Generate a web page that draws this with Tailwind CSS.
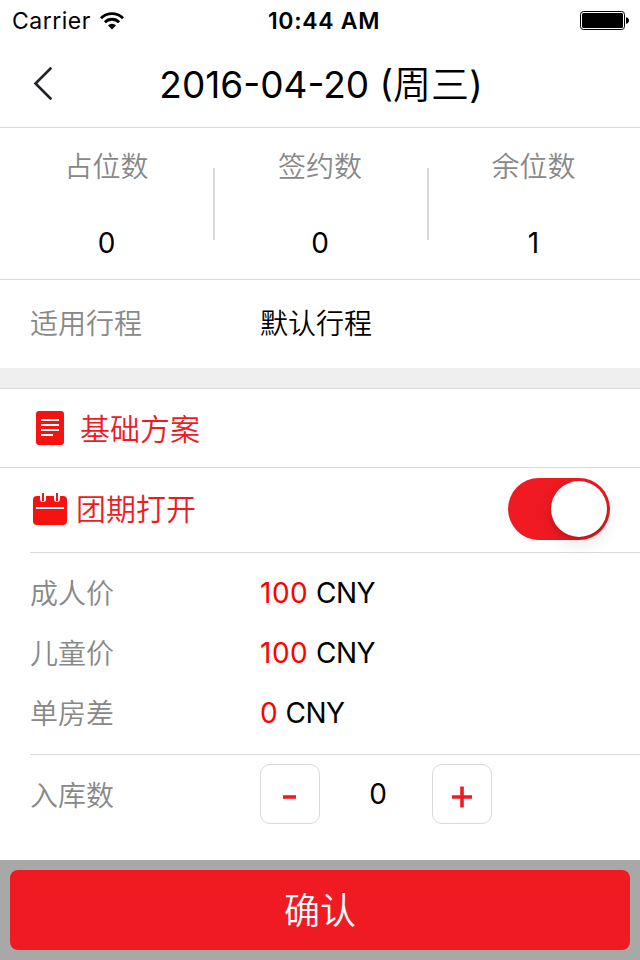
<!DOCTYPE html>
<html lang="zh-CN">
<head>
    <meta charset="UTF-8">
    <meta name="viewport" content="width=device-width, initial-scale=1.0">
    <title>团期详情</title>
    <script src="https://cdn.jsdelivr.net/npm/@tailwindcss/browser@4"></script>
    <style>
        body {
            font-family: 'Inter', 'Noto Sans CJK SC', sans-serif;
        }
    </style>
</head>
<body class="bg-white text-black w-[640px] h-[960px] flex flex-col overflow-hidden text-[28px] leading-10">

    <!-- Barre d'état -->
    <div class="h-10 shrink-0 grid grid-cols-3 items-center pl-3 pr-[11px] text-[23px]">
        <div class="flex items-center gap-[9px]">
            <span class="tracking-[0.5px] pt-px">Carrier</span>
            <svg class="w-6 h-[18px]" viewBox="0 0 24 18" fill="none" stroke="#000" stroke-width="2.9">
                <path d="M1 6.2a15.6 15.6 0 0 1 22 0"/>
                <path d="M4.9 10.2a10 10 0 0 1 14.2 0"/>
                <path d="M12 17.5l-4-4a5.7 5.7 0 0 1 8 0z" fill="#000" stroke="none"/>
            </svg>
        </div>
        <span class="text-center font-semibold tracking-[0.7px] pl-[7px] pt-px whitespace-nowrap">10:44 AM</span>
        <svg class="w-[49px] h-[19px] justify-self-end" viewBox="0 0 49 19">
            <rect x="0.5" y="0.5" width="44" height="18" rx="3" fill="none" stroke="#000"/>
            <rect x="2" y="2" width="41" height="15" rx="1.5"/>
            <path d="M46 6.2c1.7 0 3 1.4 3 3.3s-1.3 3.3-3 3.3z"/>
        </svg>
    </div>

    <!-- Titre -->
    <header class="h-22 shrink-0 relative flex items-center justify-center border-b border-[#d9d9d9]">
        <svg class="absolute left-[33px] top-[27px] w-[19px] h-[33px]" viewBox="0 0 19 33" fill="none" stroke="#222229" stroke-width="2.6" stroke-linecap="round">
            <path d="M17.5 1.5L2.5 16.5l15 15"/>
        </svg>
        <h1 class="text-[37px] whitespace-nowrap pl-0.5 pt-px font-[380]">2016-04-20 (<span class="font-[350] text-[38px]">周三</span>)</h1>
    </header>

    <!-- Places -->
    <section class="h-38 shrink-0 flex items-center border-b border-[#d9d9d9] text-center">
        <div class="w-[213px] pt-0.5">
            <p class="font-[350] text-[#888]">占位数</p>
            <p class="mt-9">0</p>
        </div>
        <div class="w-0.5 h-18 bg-[#d9d9d9]"></div>
        <div class="w-[212px] pr-0.5 pt-0.5">
            <p class="font-[350] text-[#888]">签约数</p>
            <p class="mt-9">0</p>
        </div>
        <div class="w-0.5 h-18 bg-[#d9d9d9]"></div>
        <div class="flex-1 pr-0.5 pt-0.5">
            <p class="font-[350] text-[#888]">余位数</p>
            <p class="mt-9">1</p>
        </div>
    </section>

    <!-- Itinéraire -->
    <section class="h-22 shrink-0 flex items-center pl-[30px]">
        <span class="w-[230px] font-[350] text-[#888]">适用行程</span>
        <span class="font-[350]">默认行程</span>
    </section>
    <div class="h-[21px] shrink-0 bg-[#efefef] border-b border-[#d9d9d9]"></div>

    <!-- Formule de base -->
    <section class="h-[79px] shrink-0 flex items-center pl-9 gap-4 border-b border-[#d9d9d9] text-[30px] text-[#ef1a22]">
        <svg class="w-7 h-[34px]" viewBox="0 0 28 34">
            <rect width="28" height="34" rx="3" fill="#f51211"/>
            <path d="M5 9h18M5 14h18M5 19h18M5 24h12" stroke="#fff" stroke-width="2"/>
        </svg>
        <span class="font-[350] pt-0.5">基础方案</span>
    </section>

    <!-- Ouverture du départ -->
    <section class="h-[85px] shrink-0 ml-[30px] pl-[3px] pr-[30px] pb-0.5 flex items-center border-b border-[#d9d9d9] text-[30px] text-[#ef1a22]">
        <svg class="w-[34px] h-8" viewBox="0 0 34 32">
            <rect y="3" width="34" height="29" rx="4" fill="#f51211"/>
            <path d="M7 2h6v4a3 3 0 0 1-6 0zM21 2h6v4a3 3 0 0 1-6 0z" fill="#fff"/>
            <path d="M10 0v8M24 0v8" stroke="#f51211" stroke-width="2"/>
            <path d="M3 15h28" stroke="#fff" stroke-width="2"/>
        </svg>
        <span class="ml-[9px] font-[350]">团期打开</span>
        <div class="ml-auto w-[102px] h-[62px] rounded-full bg-[#ef1a22] p-[3px] flex justify-end">
            <div class="size-14 rounded-full bg-white shadow-[0_6px_16px_rgba(0,0,0,0.12),0_2px_4px_rgba(0,0,0,0.14)]"></div>
        </div>
    </section>

    <!-- Tarifs -->
    <section class="h-[202px] shrink-0 ml-[30px] pt-5 flex flex-col gap-5 border-b border-[#d9d9d9]">
        <div class="flex">
            <span class="w-[230px] font-[350] text-[#888] pt-px -mb-px">成人价</span>
            <span><span class="text-[#f00] tracking-[0.5px]">100</span> <span class="tracking-[-0.6px]">CNY</span></span>
        </div>
        <div class="flex">
            <span class="w-[230px] font-[350] text-[#888] pt-px -mb-px">儿童价</span>
            <span><span class="text-[#f00] tracking-[0.5px]">100</span> <span class="tracking-[-0.6px]">CNY</span></span>
        </div>
        <div class="flex">
            <span class="w-[230px] font-[350] text-[#888] pt-px -mb-px">单房差</span>
            <span><span class="text-[#f00]">0</span> <span class="tracking-[-0.6px]">CNY</span></span>
        </div>
    </section>

    <!-- Stock -->
    <section class="flex-1 pl-[30px] pt-[9px] flex items-start">
        <span class="w-[230px] mt-3 font-[350] text-[#888]">入库数</span>
        <button class="size-15 rounded-[10px] border border-[#d9d9d9] flex items-center justify-center">
            <svg class="size-6 mt-1.5" viewBox="0 0 24 24" stroke="#ef1a22" stroke-width="3.6"><path d="M5 12h13"/></svg>
        </button>
        <span class="w-28 mt-[10px] pl-1 text-center">0</span>
        <button class="size-15 rounded-[10px] border border-[#d9d9d9] flex items-center justify-center">
            <svg class="size-6 mt-1.5" viewBox="0 0 24 24" stroke="#ef1a22" stroke-width="3.6"><path d="M2 12h20M12 1.5v21"/></svg>
        </button>
    </section>

    <!-- Validation -->
    <footer class="h-25 shrink-0 bg-[#a8a8a8] p-[10px]">
        <button class="w-full h-20 rounded-lg bg-[#ef1a22] text-white text-[36px] font-[350] pt-0.5">确认</button>
    </footer>
</body>
</html>
